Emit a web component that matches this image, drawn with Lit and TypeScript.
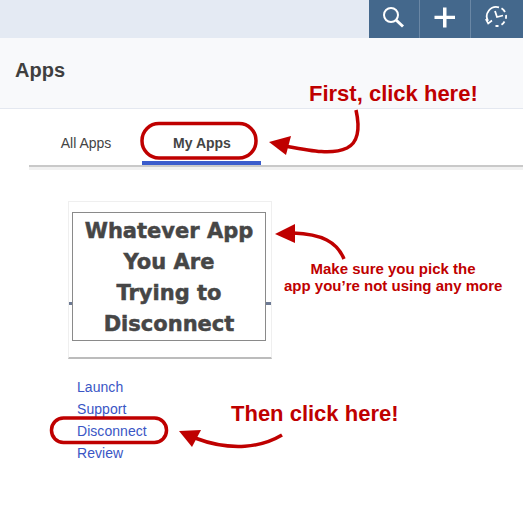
import { LitElement, html, css, svg } from "lit";
import { customElement } from "lit/decorators.js";

@customElement("app-root")
export class AppRoot extends LitElement {
  static styles = css`
    :host { display: block; position: relative; width: 523px; height: 507px; overflow: hidden; background: #fff; font-family: "Liberation Sans", Arial, sans-serif; }
    .top { height: 38px; background: #e4eaf3; display: flex; justify-content: flex-end; }
    .btn { background: #44688c; display: flex; align-items: center; justify-content: center; border-left: 1px solid #6a87a5; box-sizing: border-box; }
    .b1 { width: 50px; border-left: 0; }
    .b2 { width: 51px; }
    .b3 { width: 53px; }
    .btn svg { display: block; }
    .head { background: #f8f9fb; border-bottom: 1px solid #e4e8f0; display: flex; align-items: center; padding: 0 15px 6px; box-sizing: border-box; height: 71px; }
    h1 { margin: 0; font-size: 20px; font-weight: 700; color: #3f3f3f; }
    .tabs { margin-left: 29px; height: 58px; box-sizing: border-box; border-bottom: 2px solid #c9c9c9; display: flex; align-items: stretch; }
    .tab { font-size: 14px; color: #444; display: flex; align-items: center; justify-content: center; padding: 11px 0 0 1px; box-sizing: border-box; }
    .tab.all { width: 113px; }
    .tab.my { width: 119px; font-weight: 700; border-bottom: 4px solid #3a5ccc; padding-top: 15px; }
    .strip { margin-left: 29px; height: 3px; background: #f1f1f1; }
    .card { position: relative; margin: 31px 0 0 68px; width: 204px; height: 158px; box-sizing: border-box; border: 1px solid #efefef; border-bottom: 2px solid #bcbcbc; padding: 10px 5px 0 3px; }
    .rule { position: absolute; left: 0; right: 0; top: 100px; height: 3px; background: #6d7a94; }
    .logo { position: relative; background: #fff; border: 1px solid #8a8a8a; height: 129px; box-sizing: border-box; padding-top: 3px; display: flex; flex-direction: column; align-items: center; justify-content: center; font-family: "DejaVu Sans", sans-serif; font-size: 21px; line-height: 31px; font-weight: 700; color: #464646; -webkit-text-stroke: 0.5px #464646; }
    .links { display: flex; flex-direction: column; margin: 17px 0 0 77px; font-size: 14px; line-height: 22px; color: #3a56c5; letter-spacing: 0.05px; }
    .overlay { position: absolute; inset: 0; pointer-events: none; }
    .note { position: absolute; color: #bf0000; font-weight: 700; white-space: nowrap; line-height: 1; }
    .n1 { left: 309px; top: 83px; font-size: 22px; }
    .n2 { left: 231px; top: 403px; font-size: 22px; }
    .n3 { left: 284px; top: 260px; width: 218px; text-align: center; font-size: 15px; line-height: 17px; }
  `;

  private arrows() {
    return svg`
      <svg class="overlay" width="523" height="507" viewBox="0 0 523 507">
        <g fill="none" stroke="#bf0000" stroke-width="3.5">
          <rect x="142" y="123.5" width="114" height="34.5" rx="17"/>
          <rect x="51.5" y="418" width="115" height="24.5" rx="12"/>
          <path d="M356 110C360 128 359 142 347 148C332 155 312 151 285 146"/>
          <path d="M344 259C337 242 322 234 293 233"/>
          <path d="M282 435C262 447 232 452 195 438"/>
        </g>
        <g fill="#bf0000">
          <path d="M269 142L291 136L286 155Z"/>
          <path d="M275 234L295 224L295 243Z"/>
          <path d="M179 431L201 430L192 447Z"/>
        </g>
      </svg>`;
  }

  render() {
    return html`
      <div class="top">
        <div class="btn b1">
          <svg width="26" height="30" viewBox="0 0 26 30" fill="none" stroke="#fff"><circle cx="10" cy="11" r="7" stroke-width="2"/><path d="M15 16l7 6.5" stroke-width="3"/></svg>
        </div>
        <div class="btn b2">
          <svg width="24" height="24" viewBox="0 1.5 24 24" fill="#fff"><path d="M10 2h3.5v8.2H22v3.4h-8.5V22H10v-8.4H1.5v-3.4H10z"/></svg>
        </div>
        <div class="btn b3">
          <svg width="26" height="30" viewBox="-1 -1 26 30" fill="none" stroke="#fff" stroke-width="1.8"><path d="M3 16A9.5 9.5 0 0 1 14 2.3"/><path d="M16.5 3.2a9.5 9.5 0 0 1 3.5 3.8M21 10a9.5 9.5 0 0 1-.2 3.8M19.5 16.5a9.5 9.5 0 0 1-3 3.3M13.5 21H10.5"/><path d="M10 6l2 6 6-1.5"/><path d="M.8 14l2.4 4.5 3.8-3" stroke-width="1.6"/></svg>
        </div>
      </div>
      <div class="head"><h1>Apps</h1></div>
      <div class="tabs">
        <div class="tab all">All Apps</div>
        <div class="tab my">My Apps</div>
      </div>
      <div class="strip"></div>
      <div class="card">
        <div class="rule"></div>
        <div class="logo"><span>Whatever App</span><span>You Are</span><span>Trying to</span><span>Disconnect</span></div>
      </div>
      <div class="links"><span>Launch</span><span>Support</span><span>Disconnect</span><span>Review</span></div>
      ${this.arrows()}
      <div class="note n1">First, click here!</div>
      <div class="note n2">Then click here!</div>
      <div class="note n3">Make sure you pick the<br />app you’re not using any more</div>
    `;
  }
}
